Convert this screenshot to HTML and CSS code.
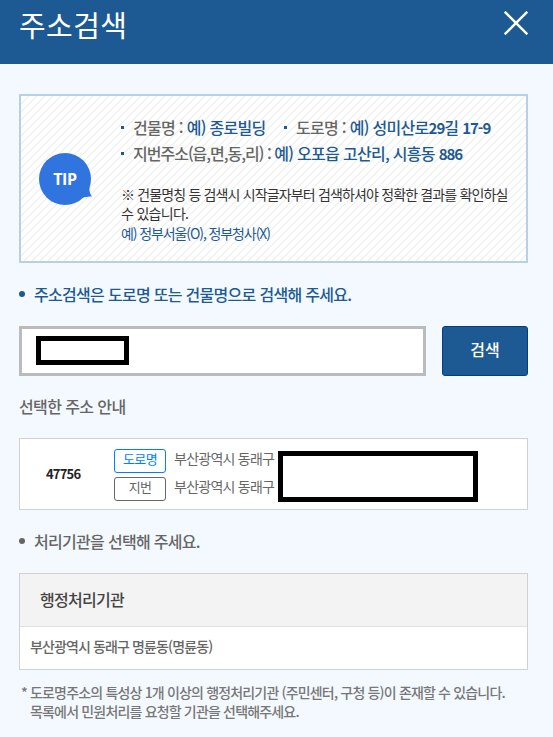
FILE: index.html
```html
<!DOCTYPE html>
<html lang="ko">
<head>
<meta charset="utf-8">
<title>주소검색</title>
<link rel="stylesheet" href="styles.css">
</head>
<body>
<header class="header">
  <h1 class="title">주소검색</h1>
  <button class="close" aria-label="닫기"><svg width="24" height="24" viewBox="0 0 24 24"><path d="M.7.7l22.6 22.6M23.3.7L.7 23.3" stroke="#fff" stroke-width="2.4" fill="none"/></svg></button>
</header>
<main class="content">
  <section class="tip">
    <div class="tip-icon">
      <svg width="53" height="52" viewBox="0 0 53 52"><circle cx="26" cy="26" r="26" fill="#2f74df"/><path d="M50.5 34C50 38 51 41 53 43.5C49 43.5 46 44 43 45Z" fill="#2f74df"/></svg>
      <span class="tip-label">TIP</span>
    </div>
    <div class="tip-body">
      <ul class="examples">
        <li class="ex ex-a">건물명 : <b>예) 종로빌딩</b></li>
        <li class="ex ex-b">도로명 : <b>예) 성미산로<strong>29</strong>길 <strong>17-9</strong></b></li>
        <li class="ex ex-c">지번주소(읍,면,동,리) : <b>예) 오포읍 고산리, 시흥동 <strong>886</strong></b></li>
      </ul>
      <p class="note"><span class="note-first">※ 건물명칭 등 검색시 시작글자부터 검색하셔야 정확한 결과를 확인하실</span><br><span class="note-second">수 있습니다.</span></p>
      <p class="note-ex">예) 정부서울(O), 정부청사(X)</p>
    </div>
  </section>
  <h2 class="bullet bullet-search">주소검색은 도로명 또는 건물명으로 검색해 주세요.</h2>
  <div class="search">
    <div class="field"><div class="mask-small"></div></div>
    <button class="submit">검색</button>
  </div>
  <h2 class="selected-title">선택한 주소 안내</h2>
  <section class="address">
    <div class="zip">47756</div>
    <div class="rows">
      <div class="row"><span class="tag tag-road">도로명</span><span class="addr">부산광역시 동래구</span></div>
      <div class="row"><span class="tag">지번</span><span class="addr">부산광역시 동래구</span></div>
    </div>
    <div class="mask-large"></div>
  </section>
  <h2 class="bullet bullet-office">처리기관을 선택해 주세요.</h2>
  <section class="office">
    <div class="office-head">행정처리기관</div>
    <div class="office-row">부산광역시 동래구 명륜동(명륜동)</div>
  </section>
  <div class="foot">
    <span class="star">*</span>
    <p>도로명주소의 특성상 1개 이상의 행정처리기관 (주민센터, 구청 등)이 존재할 수 있습니다.<br>목록에서 민원처리를 요청할 기관을 선택해주세요.</p>
  </div>
</main>
</body>
</html>
```
FILE: styles.css
```css
* { box-sizing: border-box; margin: 0; padding: 0; }
body { height: 737px; overflow: hidden; background: #f3f9fe; color: #666; font-family: "Noto Sans CJK KR", sans-serif; white-space: nowrap; }
button { border: 0; background: none; font-family: inherit; }
.header { height: 64px; background: #1d5a93; display: flex; justify-content: space-between; align-items: flex-start; padding: 0 25px 0 19px; }
.title { color: #fff; font-size: 29px; font-weight: 400; line-height: 48px; letter-spacing: .4px; }
.close { margin-top: 11px; height: 24px; width: 24px; }
.close svg { display: block; }
.content { padding: 30px 25px 0 19px; }

.tip { height: 169px; border: 2px solid #b6d0e8; display: flex; background: linear-gradient(135deg, #eee 0 2%, #fff 8% 42%, #eee 48% 52%, #fff 58% 92%, #eee 98%) 0 0 / 8px 8px; }
.tip-icon { position: relative; width: 53px; height: 52px; margin: 57px 0 0 18px; }
.tip-icon svg { display: block; }
.tip-label { position: absolute; inset: 0 1px 0 0; text-align: center; color: #fff; font: 700 16px/52px "Open Sans", sans-serif; letter-spacing: -.3px; }
.tip-body { margin: 18px 0 0 28px; }
.examples { list-style: none; display: flex; flex-wrap: wrap; width: 385px; }
.ex { height: 26px; font-size: 16px; line-height: 26px; font-weight: 500; letter-spacing: -.7px; display: flex; align-items: baseline; white-space: pre; }
.ex::before { content: ""; width: 3px; height: 3px; background: #1d5a93; margin: 0 9px 0 1px; align-self: center; }
.ex b { color: #1d5a93; font-weight: 500; letter-spacing: -.7px; }
.ex strong { font-weight: 700; font-size: 15px; line-height: 1; letter-spacing: -1px; }
.ex-a { width: 163px; }
.ex-c { letter-spacing: -1px; }
.note { margin-top: 19px; padding-left: 1px; color: #333; font-size: 14px; line-height: 19px; letter-spacing: -.7px; }
.note-first { letter-spacing: -.85px; }
.note-ex { padding-left: 1px; color: #1d5a93; font-size: 14px; line-height: 21px; letter-spacing: -1.1px; }

.bullet { display: flex; align-items: center; font-size: 16px; font-weight: 500; line-height: 24px; letter-spacing: -.7px; }
.bullet::before { content: ""; width: 6px; height: 6px; border-radius: 50%; background: currentColor; margin-right: 9px; }
.bullet-search { margin-top: 19px; color: #1d5a93; }
.search { display: flex; gap: 16px; margin-top: 20px; }
.field { width: 407px; height: 50px; background: #fff; border: 3px solid #bbb; padding: 7px 14px; }
.mask-small { width: 93px; height: 29px; border: 5px solid #000; }
.submit { width: 86px; height: 50px; background: #1d5a93; border: 1px solid #004080; border-radius: 3px; color: #fff; font-size: 16px; font-weight: 500; line-height: 44px; padding-bottom: 4px; }
.selected-title { margin-top: 18px; font-size: 16px; font-weight: 500; line-height: 24px; letter-spacing: -.6px; }
.address { display: flex; height: 72px; margin-top: 20px; border: 1px solid #d0d0d5; background: #fff; }
.zip { width: 94px; padding-left: 26px; color: #222; font-size: 13px; font-weight: 700; line-height: 70px; letter-spacing: -.8px; }
.rows { width: 164px; display: flex; flex-direction: column; gap: 4px; padding-top: 10px; }
.row { display: flex; height: 24px; }
.tag { width: 52px; border: 1px solid #666; border-radius: 3px; text-align: center; font-size: 13px; line-height: 18px; letter-spacing: -.7px; margin-right: 8px; }
.tag-road { border-color: #0080ff; color: #0080ff; }
.addr { font-size: 14px; line-height: 19px; letter-spacing: -.75px; }
.mask-large { width: 200px; height: 51px; margin-top: 12px; border: 5px solid #000; }
.bullet-office { margin-top: 19px; }
.office { height: 97px; margin-top: 20px; border: 1px solid #d0d0d5; background: #fff; }
.office-head { height: 53px; padding-left: 20px; border-bottom: 1px solid #e0e0e5; background: #f3f3f3; color: #444; font-size: 16px; font-weight: 500; line-height: 51px; letter-spacing: -.7px; }
.office-row { padding-left: 10px; font-size: 14px; font-weight: 500; line-height: 39px; letter-spacing: -.88px; }
.foot { display: flex; gap: 4px; margin-top: 13px; padding-left: 2px; color: #777; font-size: 14px; font-weight: 500; line-height: 19px; letter-spacing: -.83px; }
.star { width: 5px; }
```
